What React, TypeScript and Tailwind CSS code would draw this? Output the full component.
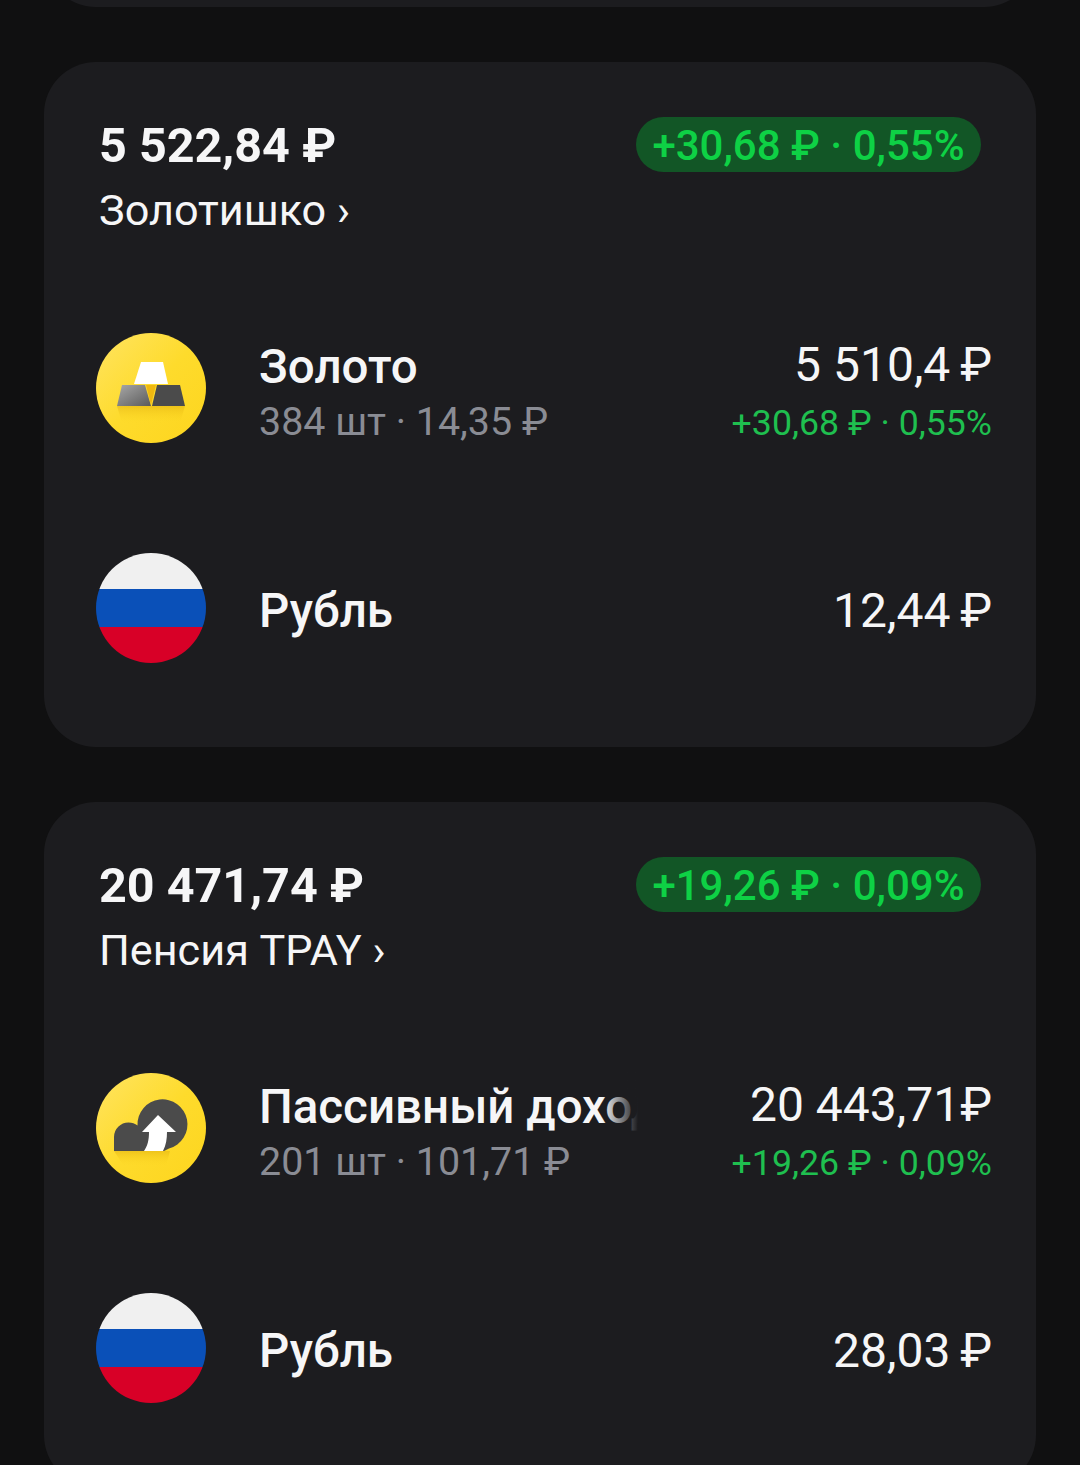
import type { ReactNode } from "react";

const FONT = "font-['Roboto','Noto_Sans',sans-serif]";

function GoldIcon() {
  return (
    <svg viewBox="0 0 110 110" className="h-[110px] w-[110px] shrink-0">
      <defs>
        <linearGradient id="goldBg" x1="0" y1="0" x2="1" y2="1">
          <stop offset="0" stopColor="#ffe462" />
          <stop offset="0.5" stopColor="#fedb2c" />
          <stop offset="1" stopColor="#fdd51e" />
        </linearGradient>
        <linearGradient id="barLeft" x1="0" y1="0" x2="1" y2="1">
          <stop offset="0" stopColor="#a8a8a8" />
          <stop offset="1" stopColor="#5a5a5a" />
        </linearGradient>
        <linearGradient id="goldShade" x1="0" y1="0" x2="0" y2="1">
          <stop offset="0" stopColor="#dca90a" stopOpacity="0.45" />
          <stop offset="1" stopColor="#fdd51e" stopOpacity="0" />
        </linearGradient>
      </defs>
      <circle cx="55" cy="55" r="55" fill="url(#goldBg)" />
      <path d="M21 73H89L84 90H26Z" fill="url(#goldShade)" />
      <path d="M45 29H67L72 51H38Z" fill="#fff" />
      <path d="M26 52H49L55 73H21Z" fill="url(#barLeft)" />
      <path d="M61 52H84L89 73H56Z" fill="#4b4b4b" />
      <path d="M50 52H60L55 72Z" fill="#efb810" />
    </svg>
  );
}

function CloudIcon() {
  return (
    <svg viewBox="0 0 110 110" className="h-[110px] w-[110px] shrink-0">
      <defs>
        <linearGradient id="cloudBg" x1="0" y1="0" x2="1" y2="1">
          <stop offset="0" stopColor="#ffe462" />
          <stop offset="0.5" stopColor="#fedb2c" />
          <stop offset="1" stopColor="#fdd51e" />
        </linearGradient>
        <linearGradient id="cloudShade" x1="0" y1="0" x2="0" y2="1">
          <stop offset="0" stopColor="#dca90a" stopOpacity="0.45" />
          <stop offset="1" stopColor="#fdd51e" stopOpacity="0" />
        </linearGradient>
      </defs>
      <circle cx="55" cy="55" r="55" fill="url(#cloudBg)" />
      <path d="M18 78H74L70 93H28Z" fill="url(#cloudShade)" />
      <path
        d="M18 78V64A14.500 14.500 0 0 1 32.500 49.500C36 49.500 39 50.500 41.500 52.500A25 25 0 1 1 73 75.500L68 78Z"
        fill="#4b4b4b"
      />
      <path d="M62 42L80 59H71C71 66 70 72 67 78H48C51.500 73 53 67 53 59H46Z" fill="#fff" />
    </svg>
  );
}

function RubFlag() {
  return (
    <div className="flex h-[110px] w-[110px] shrink-0 flex-col overflow-hidden rounded-full">
      <div className="h-[36px] bg-[#f0f0f0]" />
      <div className="h-[38px] bg-[#0a50b8]" />
      <div className="h-[36px] bg-[#d80027]" />
    </div>
  );
}

type Row = {
  icon: ReactNode;
  name: string;
  sub?: string;
  value: string;
  change?: string;
  fade?: boolean;
};

type Portfolio = {
  total: string;
  title: string;
  badge: string;
  rows: Row[];
};

// thin space before the ruble sign in the row values, the app sets it tighter there
const portfolios: Portfolio[] = [
  {
    total: "5 522,84 ₽",
    title: "Золотишко ›",
    badge: "+30,68 ₽ · 0,55%",
    rows: [
      {
        icon: <GoldIcon />,
        name: "Золото",
        sub: "384 шт · 14,35 ₽",
        value: "5 510,4\u2009₽",
        change: "+30,68 ₽ · 0,55%",
      },
      { icon: <RubFlag />, name: "Рубль", value: "12,44\u2009₽" },
    ],
  },
  {
    total: "20 471,74 ₽",
    title: "Пенсия TPAY ›",
    badge: "+19,26 ₽ · 0,09%",
    rows: [
      {
        icon: <CloudIcon />,
        name: "Пассивный доход",
        sub: "201 шт · 101,71 ₽",
        value: "20 443,71₽",
        change: "+19,26 ₽ · 0,09%",
        fade: true,
      },
      { icon: <RubFlag />, name: "Рубль", value: "28,03\u2009₽" },
    ],
  },
];

function AssetRow({ row }: { row: Row }) {
  return (
    <div className="flex h-[110px] items-center">
      {row.icon}
      <div
        className={`relative ml-[53px] w-[379px] overflow-hidden whitespace-nowrap ${row.sub ? "pt-[11px]" : "pt-[6px]"}`}
      >
        <div className="text-[47.500px] leading-[56px] font-medium text-[#f6f6f7]">{row.name}</div>
        {row.sub && <div className="text-[39.400px] leading-[54px] text-[#8a8c94]">{row.sub}</div>}
        {row.fade && (
          <div className="absolute top-0 right-0 h-[68px] w-[36px] bg-gradient-to-r from-transparent to-[#1c1c1f]" />
        )}
      </div>
      <div className={`ml-auto text-right whitespace-nowrap ${row.change ? "pt-[15px]" : "pt-[4px]"}`}>
        <div className="text-[48px] leading-[55px] text-[#f6f6f7]">{row.value}</div>
        {row.change && <div className="text-[35.700px] leading-[62px] text-[#1fbf4f]">{row.change}</div>}
      </div>
    </div>
  );
}

function PortfolioCard({ data }: { data: Portfolio }) {
  return (
    <section className="rounded-[52px] bg-[#1c1c1f] pt-[55px] pr-[44px] pb-[84px] pl-[52px]">
      <div className="flex items-start justify-between pr-[11px] pl-[3px]">
        <div>
          <div className="text-[48.500px] leading-[58px] font-bold text-[#f6f6f7]">{data.total}</div>
          <div className="mt-[10px] text-[43.200px] leading-[52px] text-[#f6f6f7]">{data.title}</div>
        </div>
        <div className="flex h-[55px] w-[345px] items-center justify-center rounded-full bg-[#125626] pt-[2px] text-[42px] font-medium text-[#0ed145]">
          {data.badge}
        </div>
      </div>
      <div className="mt-[96px] flex flex-col gap-[110px]">
        {data.rows.map((row) => (
          <AssetRow key={row.name} row={row} />
        ))}
      </div>
    </section>
  );
}

export default function App() {
  return (
    <div className={`h-[1465px] w-[1080px] overflow-hidden bg-[#101011] px-[44px] ${FONT}`}>
      <div className="-mt-[53px] h-[60px] rounded-b-[52px] bg-[#1c1c1f]" />
      <div className="mt-[55px] flex flex-col gap-[55px]">
        {portfolios.map((p) => (
          <PortfolioCard key={p.title} data={p} />
        ))}
      </div>
    </div>
  );
}
